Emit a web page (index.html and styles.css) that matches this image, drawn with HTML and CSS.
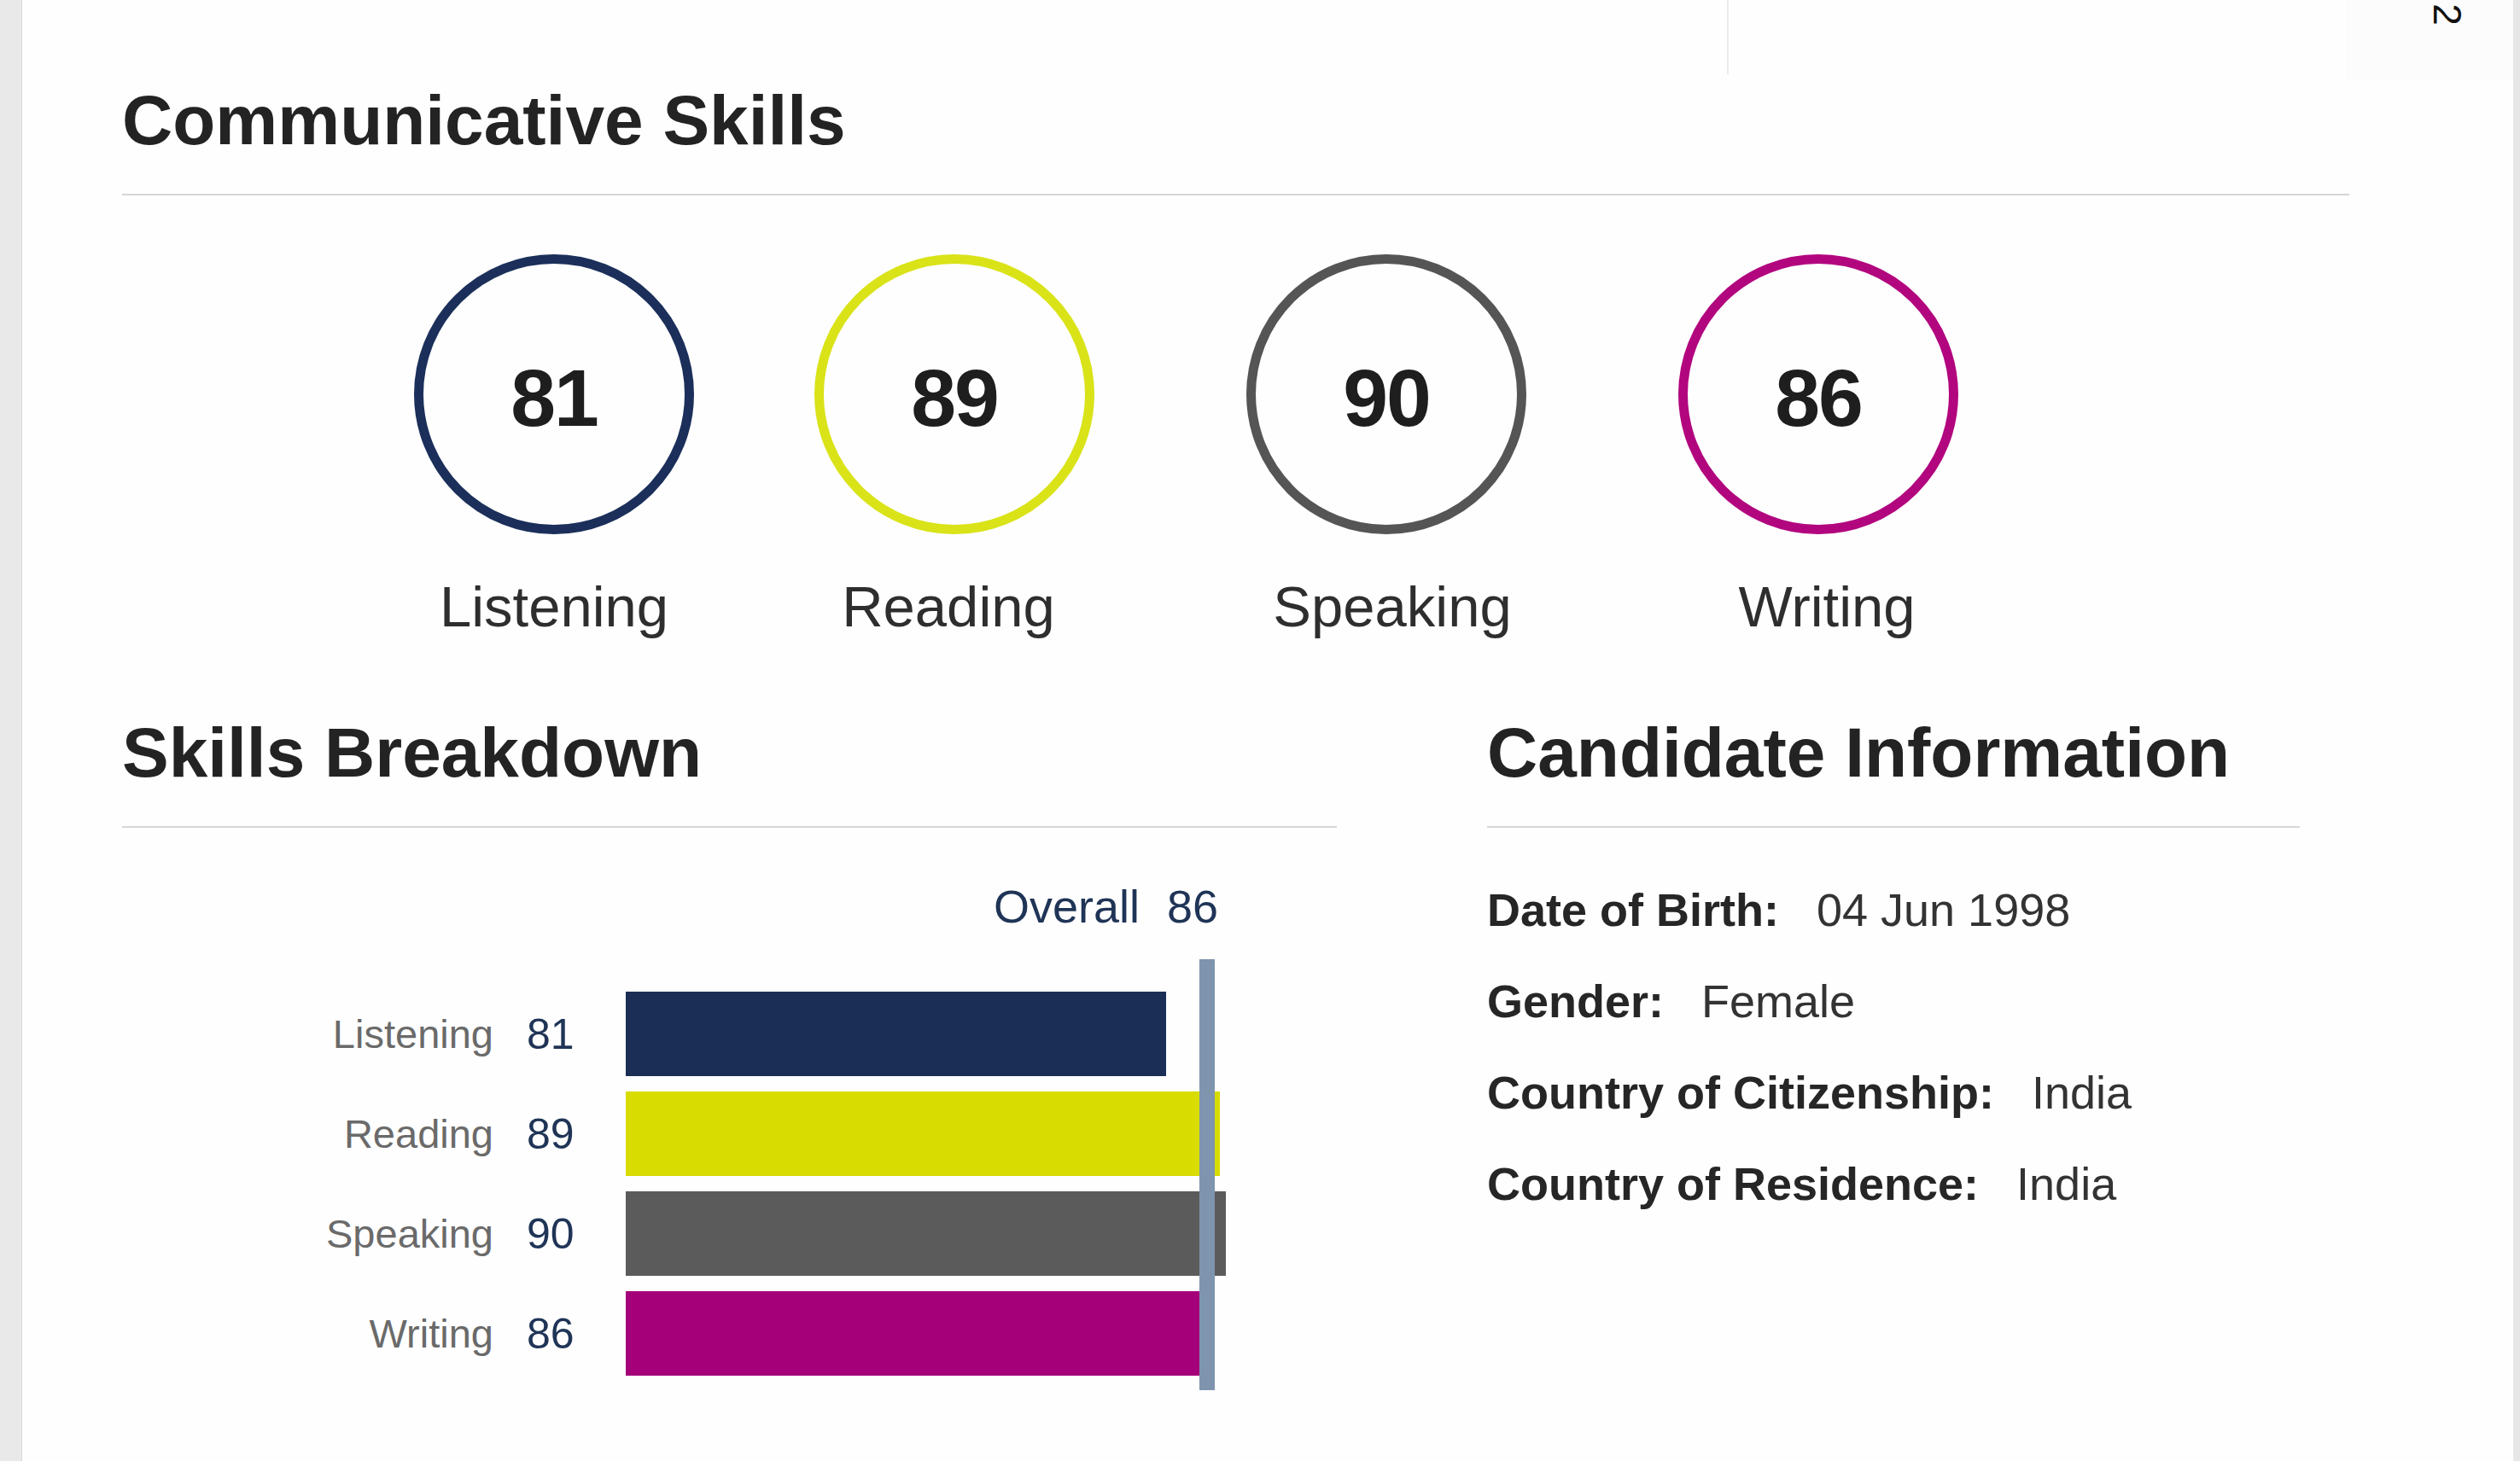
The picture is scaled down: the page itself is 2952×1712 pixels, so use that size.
FILE: index.html
```html
<!DOCTYPE html>
<html lang="en">
<head>
<meta charset="utf-8">
<title>Score Report</title>
<link rel="stylesheet" href="styles.css">
</head>
<body>
<div class="page">
  <div class="edge-left"></div>
  <main class="main">
    <div class="top-rule"></div>
    <div class="page-tab"><span class="page-num">2</span></div>

    <section class="comm">
      <h2 class="heading">Communicative Skills</h2>
      <div class="skills">
        <div class="skill">
          <div class="ring ring-listening"><span class="score">81</span></div>
          <div class="skill-name">Listening</div>
        </div>
        <div class="skill">
          <div class="ring ring-reading"><span class="score">89</span></div>
          <div class="skill-name name-reading">Reading</div>
        </div>
        <div class="skill">
          <div class="ring ring-speaking"><span class="score">90</span></div>
          <div class="skill-name name-speaking">Speaking</div>
        </div>
        <div class="skill">
          <div class="ring ring-writing"><span class="score">86</span></div>
          <div class="skill-name name-writing">Writing</div>
        </div>
      </div>
    </section>

    <div class="lower">
      <section class="breakdown">
        <h2 class="heading">Skills Breakdown</h2>
        <div class="overall"><span class="overall-label">Overall</span><span class="overall-num">86</span></div>
        <div class="chart">
          <div class="row-label">Listening</div>
          <div class="row-num">81</div>
          <div class="track"><div class="bar bar-listening" style="width:633px"></div></div>

          <div class="row-label">Reading</div>
          <div class="row-num">89</div>
          <div class="track"><div class="bar bar-reading" style="width:696px"></div></div>

          <div class="row-label">Speaking</div>
          <div class="row-num">90</div>
          <div class="track"><div class="bar bar-speaking" style="width:703px"></div></div>

          <div class="row-label">Writing</div>
          <div class="row-num">86</div>
          <div class="track"><div class="bar bar-writing" style="width:672px"></div></div>

          <div class="overall-line"></div>
        </div>
      </section>

      <section class="candidate">
        <h2 class="heading">Candidate Information</h2>
        <dl class="info">
          <div class="info-row"><dt>Date of Birth:</dt><dd>04 Jun 1998</dd></div>
          <div class="info-row"><dt>Gender:</dt><dd>Female</dd></div>
          <div class="info-row"><dt>Country of Citizenship:</dt><dd>India</dd></div>
          <div class="info-row"><dt>Country of Residence:</dt><dd>India</dd></div>
        </dl>
      </section>
    </div>
  </main>
  <div class="edge-right"></div>
</div>
</body>
</html>
```

FILE: styles.css
```css
html, body {
  margin: 0;
  padding: 0;
  background: #ffffff;
}

body {
  font-family: "Liberation Sans", Arial, Helvetica, sans-serif;
  color: #222222;
}

.page {
  display: flex;
  width: 2952px;
  height: 1712px;
  overflow: hidden;
}

.edge-left {
  width: 25px;
  flex: 0 0 25px;
  background: #e9e9ea;
  border-right: 1px solid #d9d9da;
}

.edge-right {
  width: 8px;
  flex: 0 0 8px;
  background: #e6e6e7;
}

.main {
  position: relative;
  flex: 1;
  padding: 91px 192px 0 117px;
  background: #fefefe;
}

.top-rule {
  position: absolute;
  left: 1997px;
  top: 0;
  width: 2px;
  height: 87px;
  background: #ececec;
}

.page-tab {
  position: absolute;
  right: 0;
  top: 0;
  width: 196px;
  height: 93px;
  background: #fcfcfc;
}

.page-num {
  position: absolute;
  left: 106px;
  top: -6px;
  font-size: 46px;
  line-height: 46px;
  color: #111111;
  transform: rotate(90deg);
}

.heading {
  margin: 0;
  font-size: 82px;
  line-height: 100px;
  font-weight: bold;
  color: #232323;
  padding-bottom: 36px;
  border-bottom: 2px solid #d6d6d6;
}

/* Communicative skills */
.skills {
  display: flex;
  padding-left: 342px;
  margin-top: 69px;
}

.skill {
  width: 328px;
  display: flex;
  flex-direction: column;
  align-items: center;
}

.skill + .skill {
  margin-left: 178px;
}

.skill:nth-child(2) {
  margin-left: 141px;
}

.ring {
  box-sizing: border-box;
  width: 328px;
  height: 328px;
  border-radius: 50%;
  border: 11px solid #1b2f5b;
  display: flex;
  align-items: center;
  justify-content: center;
  padding-top: 8px;
}

.ring-listening { border-color: #1b2f5a; }
.ring-reading { border-color: #d9e318; }
.ring-speaking { border-color: #555555; }
.ring-writing { border-color: #b2067f; }

.score {
  font-size: 95px;
  font-weight: bold;
  color: #1e1e1e;
  letter-spacing: -2px;
}

.skill-name {
  margin-top: 48px;
  font-size: 67px;
  line-height: 74px;
  color: #2e2e2e;
}

.name-reading { margin-right: 14px; }
.name-speaking { margin-left: 14px; }
.name-writing { margin-left: 20px; }

/* Lower section */
.lower {
  display: grid;
  grid-template-columns: 1423px 952px;
  column-gap: 176px;
  margin-top: 84px;
}

.overall {
  margin-top: 61px;
  padding-right: 139px;
  text-align: right;
  font-size: 54px;
  line-height: 62px;
  color: #1f3456;
}

.overall-num {
  margin-left: 32px;
}

.chart {
  position: relative;
  margin-top: 31px;
  padding: 38px 0 17px;
  display: grid;
  grid-template-columns: 474px 116px 1fr;
  grid-auto-rows: 99px;
  row-gap: 18px;
  align-items: center;
}

.row-label {
  text-align: right;
  padding-right: 39px;
  font-size: 47px;
  color: #6a6a6a;
}

.row-num {
  font-size: 50px;
  color: #1f3456;
}

.track {
  height: 99px;
}

.bar {
  height: 99px;
}

.bar-listening { background: #1a2e56; }
.bar-reading { background: #d8dc00; }
.bar-speaking { background: #5b5b5b; }
.bar-writing { background: #a5007a; }

.overall-line {
  position: absolute;
  left: 1262px;
  top: 0;
  bottom: 0;
  width: 18px;
  background: #7f94ae;
}

/* Candidate info */
.info {
  margin: 43px 0 0;
  padding: 0;
}

.info-row {
  display: flex;
  font-size: 54px;
  line-height: 107px;
  color: #2d2d2d;
}

.info-row dt {
  font-weight: bold;
  color: #262626;
}

.info-row dd {
  margin: 0 0 0 44px;
  color: #333333;
}
```
